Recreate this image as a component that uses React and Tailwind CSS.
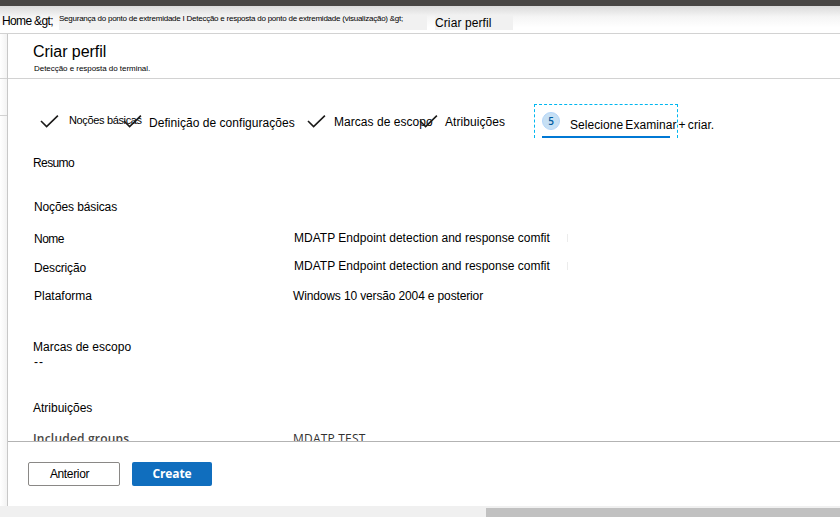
function Check({ className = "" }) {
  return (
    <svg className={`h-[13px] w-[19px] shrink-0 ${className}`} viewBox="0 0 19 13" fill="none">
      <path d="M1 6 L6.6 11.6 L17.9 0.6" stroke="#1b1a19" strokeWidth="1.6" />
    </svg>
  );
}

const rows = [
  { label: "Nome", value: "MDATP Endpoint detection and response comfit", row: "mt-[15px] h-7", labelCls: "mt-px tracking-[-0.5px]", valueCls: "ml-px tracking-[0.02px]", mark: true },
  { label: "Descrição", value: "MDATP Endpoint detection and response comfit", row: "h-[30px]", labelCls: "mt-[2px] tracking-[-0.15px]", valueCls: "ml-px tracking-[0.02px]", mark: true },
  { label: "Plataforma", value: "Windows 10 versão 2004 e posterior", row: "h-[51px]", labelCls: "", valueCls: "tracking-[-0.14px]" },
];

export default function App() {
  return (
    <div className="flex h-[517px] w-[840px] flex-col overflow-hidden bg-white font-['Liberation_Sans',Arial,sans-serif] text-[12px] leading-4 whitespace-nowrap text-black">
      <div className="h-[6px] shrink-0 bg-[#484644]" />
      <nav className="flex h-7 shrink-0 items-start border-b border-[#d2d2d2] bg-linear-to-b from-[#dadada] via-[#f5f5f5] via-40% to-white to-80%">
        <span className="mt-[7px] ml-[2px] w-[57px] tracking-[-0.65px]">Home &amp;gt;</span>
        <span className="mt-[9px] h-[15px] w-[368px] bg-[#f1f1f1] text-[8px] leading-[7px] tracking-[-0.24px]">
          Segurança do ponto de extremidade I Detecção e resposta do ponto de extremidade (visualização) &amp;gt;
        </span>
        <span className="mt-[9px] ml-2 h-[15px] w-[78px] bg-[#f1f1f1] tracking-[0.1px]">Criar perfil</span>
      </nav>
      <div className="flex min-h-0 flex-1">
        <aside className="flex w-[7px] shrink-0 flex-col bg-linear-to-r from-white to-[#f3f3f3]">
          <div className="h-[45px] border-b border-[#d2d2d2]" />
          <div className="h-[37px] border-b border-[#d2d2d2]" />
        </aside>
        <main className="flex min-w-0 flex-1 flex-col border-l border-[#c8c8c8]">
          <header className="h-[45px] shrink-0 border-b border-[#d2d2d2] pl-[25px]">
            <h1 className="mt-2 text-[16px] leading-5 tracking-[-0.05px]">Criar perfil</h1>
            <p className="ml-px h-3 text-[8px] leading-[14px] tracking-[-0.04px]">Detecção e resposta do terminal.</p>
          </header>
          <section className="min-h-0 flex-1 overflow-hidden pl-[25px]">
            <div className="mt-[25px] flex h-[34px] items-start">
              <Check className="mt-[11px] ml-[7px]" />
              <span className="mt-[8px] ml-[10px] w-[54px] text-[11px] tracking-[-0.35px]">Noções básicas</span>
              <Check className="mt-[11px]" />
              <span className="mt-[11px] ml-[7px] w-[158px] tracking-[0.04px]">Definição de configurações</span>
              <Check className="mt-[11px]" />
              <span className="mt-[10px] ml-2 w-[85px] tracking-[0.04px]">Marcas de escopo</span>
              <Check className="mt-[11px]" />
              <span className="mt-[10px] ml-[7px] w-[89px] tracking-[0.06px]">Atribuições</span>
              <div className="flex h-[34px] w-[144px] flex-col justify-between border border-b-0 border-dashed border-[#00b7f0] pl-[7px]">
                <div className="flex">
                  <span className="mt-[7px] flex size-[18px] shrink-0 items-center justify-center rounded-full border border-[#b4d6fa] bg-[#c7e0f4] font-['Open_Sans',sans-serif] text-[10px] font-semibold text-[#005a9e]">5</span>
                  <span className="mt-[12px] ml-[10px] tracking-[0.05px] [word-spacing:-1.2px]">Selecione Examinar + criar.</span>
                </div>
                <div className="h-[2px] w-32 shrink-0 bg-[#0078d4]" />
              </div>
            </div>
            <h2 className="mt-[17px] tracking-[-0.6px]">Resumo</h2>
            <h2 className="mt-[28px] ml-px tracking-[-0.12px]">Noções básicas</h2>
            {rows.map((r) => (
              <div key={r.label} className={`flex items-start ${r.row}`}>
                <span className={`ml-px w-[259px] ${r.labelCls}`}>{r.label}</span>
                <span className={`w-[273px] ${r.valueCls}`}>{r.value}</span>
                {r.mark && <span className="mt-1 h-2 w-px bg-[#ececec]" />}
              </div>
            ))}
            <h2>Marcas de escopo</h2>
            <p className="ml-px h-[45px] leading-[15px] tracking-[1px]">--</p>
            <h2>Atribuições</h2>
            <div className="mt-[15px] flex font-['Open_Sans',sans-serif] text-[12px] text-[#323130]">
              <span className="w-[260px] font-semibold tracking-[0.2px] text-[#484644]">Included groups</span>
              <span className="tracking-[0.2px]">MDATP TEST</span>
            </div>
          </section>
          <footer className="flex h-[65px] shrink-0 gap-3 border-t border-[#b3b3b3] pt-5 pl-5">
            <button className="h-6 w-[92px] rounded-[2px] border border-[#8a8886] pr-[9px] tracking-[-0.35px]">Anterior</button>
            <button className="h-6 w-20 rounded-[2px] bg-[#106ebe] font-['Open_Sans',sans-serif] font-bold tracking-[-0.15px] text-white">Create</button>
          </footer>
        </main>
      </div>
      <div className="h-[11px] shrink-0 bg-[#f0f0f0] pt-[2px]">
        <div className="ml-[486px] h-[9px] bg-[#c1c1c1]" />
      </div>
    </div>
  );
}
